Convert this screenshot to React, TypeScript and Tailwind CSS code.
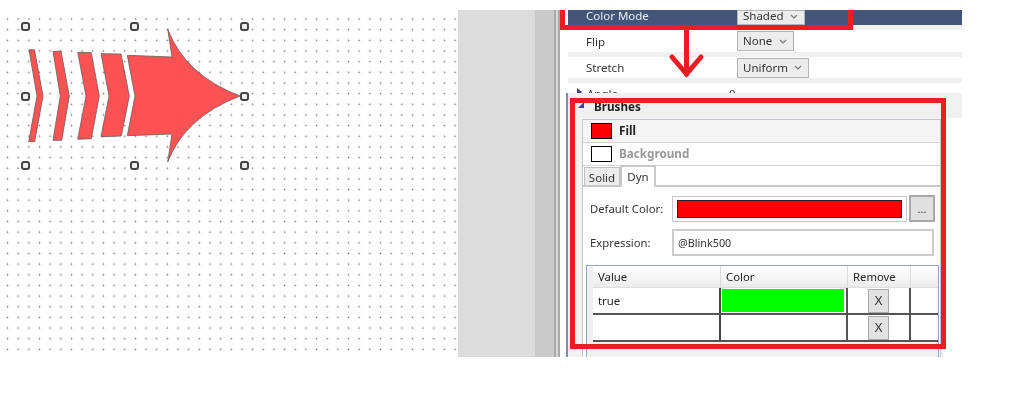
const handles = [
  "left-[21px] top-[12px]",
  "left-[130px] top-[12px]",
  "left-[240px] top-[12px]",
  "left-[21px] top-[82px]",
  "left-[240px] top-[82px]",
  "left-[21px] top-[151px]",
  "left-[130px] top-[151px]",
  "left-[240px] top-[151px]",
];

function ChevronDown() {
  return (
    <svg width="8" height="5" viewBox="0 0 8 5" fill="none" stroke="#777" strokeWidth="1.1">
      <path d="M1 1l3 3 3-3" />
    </svg>
  );
}

function Select({ label, width, height, className }: { label: string; width: string; height: string; className?: string }) {
  return (
    <div className={`${width} ${height} flex items-center justify-between pl-[5px] pr-[6px] bg-[#ececec] border border-[#b4b4b4] text-[11.5px] text-[#333] ${className ?? ""}`}>
      <span>{label}</span>
      <ChevronDown />
    </div>
  );
}

function ArrowShape() {
  return (
    <svg className="absolute left-0 top-[-10px]" width="260" height="180" viewBox="0 0 260 180" fill="#ff5252" stroke="#6b5a5a" strokeWidth="0.8">
      <path d="M29 49.7L34.5 49.7L43 96L34.7 141.7L28.7 141.7L37 96Z" />
      <path d="M53 51.5L61 51L69.3 96L61.7 140.3L53 140.3L60.3 96Z" />
      <path d="M77.7 52.3L91.3 52.7L99.3 96L91.3 138.7L77.7 139.3L86 96Z" />
      <path d="M101 53.7L121 54L129.3 96L121.3 136L101 136.7L109 96Z" />
      <path d="M127.3 55.3L172 57L167.7 29Q185 75 240 96Q185 117 167.7 162L172 134L127.3 135.7L135 96Z" />
    </svg>
  );
}

function Canvas() {
  return (
    <div className="relative w-[458px] h-full bg-white bg-[radial-gradient(circle,#787878_0.7px,transparent_1.1px)] bg-[size:10.67px_10.67px] bg-[position:2.2px_3.7px]">
      <ArrowShape />
      {handles.map((pos) => (
        <div key={pos} className={`absolute ${pos} w-[9px] h-[9px] rounded-[3px] bg-[#eeeeee] border-2 border-[#444]`} />
      ))}
    </div>
  );
}

function PropRow({ label, children, className, labelClass }: { label: string; children: React.ReactNode; className: string; labelClass?: string }) {
  return (
    <div className={`flex items-center pl-[18px] ${className}`}>
      <span className={`w-[151px] text-[11.5px] ${labelClass ?? ""}`}>{label}</span>
      {children}
    </div>
  );
}

function BrushRow({ color, label, active }: { color: string; label: string; active?: boolean }) {
  return (
    <div className={`flex items-center h-[23px] pl-[8px] gap-[7px] border-b border-[#d4d4da] ${active ? "bg-[#f5f5f5]" : "bg-white"}`}>
      <div className={`w-[21px] h-[16px] border border-black ${color}`} />
      <span className={`text-[11.7px] font-bold ${active ? "text-[#222]" : "text-[#999]"}`}>{label}</span>
    </div>
  );
}

function DynTable() {
  const rows = [
    { value: "true", green: true },
    { value: "", green: false },
  ];
  return (
    <div className="h-[100px] mt-[9px] bg-[#f0f0f0] border-l border-t border-r border-[#8fa5bf] text-[11.3px] text-[#222]">
      <div className="flex h-[22px] ml-[6px] bg-gradient-to-b from-white to-[#ececee] border-b border-[#dddddd]">
        <div className="w-[128px] pl-[5px] pt-[1px] flex items-center border-r border-[#dcdcdc]">Value</div>
        <div className="w-[127px] pl-[5px] pt-[1px] flex items-center border-r border-[#dcdcdc]">Color</div>
        <div className="w-[63px] pl-[5px] pt-[1px] flex items-center border-r border-[#dcdcdc]">Remove</div>
      </div>
      {rows.map((row, i) => (
        <div key={i} className="flex h-[27px] ml-[6px] bg-white border-b-2 border-[#555]">
          <div className="w-[128px] pl-[5px] pt-[1px] flex items-center border-r-2 border-[#444]">{row.value}</div>
          <div className="w-[127px] py-[1px] pl-[1px] pr-[2px] border-r-2 border-[#555]">
            {row.green && <div className="w-full h-full bg-[#00ff00]" />}
          </div>
          <div className="w-[63px] flex items-center justify-center border-r-2 border-[#555]">
            <div className="w-[21px] h-[24px] flex items-center justify-center bg-[#e2e2e2] border border-[#aaaaaa] text-[13px] text-[#333]">
              X
            </div>
          </div>
        </div>
      ))}
    </div>
  );
}

function BrushesPanel() {
  return (
    <div className="w-[377px] h-full pl-[14px] pr-[2px] bg-[#f2f2f2] border-l-2 border-[#7d8ea8] overflow-hidden">
      <div className="h-[300px] mt-[1px] bg-white border-l border-r border-t border-[#c4c4cc]">
        <BrushRow color="bg-[#ff0000]" label="Fill" active />
        <BrushRow color="bg-white" label="Background" />
        <div className="flex items-end h-[21px] pl-[1px] border-b-2 border-[#c8c8c8]">
          <div className="w-[36px] h-[18px] pt-[2px] flex items-center justify-center bg-[#ececec] border border-b-0 border-[#c0c0c0] text-[11.5px]">Solid</div>
          <div className="w-[36px] h-[22px] -mb-[2px] flex items-center justify-center bg-white border-2 border-b-0 border-[#c8c8c8] text-[11.5px]">Dyn</div>
        </div>
        <div className="pt-[8px] pl-[3px] pr-[1px]">
          <div className="flex items-center h-[27px] text-[11.3px] text-[#333]">
            <span className="w-[86px] pl-[4px] pt-[1px]">Default Color:</span>
            <div className="w-[235px] h-[26px] flex items-center px-[4px] border border-[#c8c8c8]">
              <div className="w-full h-[18px] bg-[#ff0000] border border-[#222]" />
            </div>
            <div className="ml-[2px] w-[26px] h-[27px] flex items-center justify-center bg-[#e0e0e0] border-2 border-[#a8a8a8] text-[11px] leading-none">...</div>
          </div>
          <div className="flex items-center h-[27px] mt-[7px] text-[11.3px] text-[#333]">
            <span className="w-[86px] pl-[4px] pt-[1px]">Expression:</span>
            <div className="w-[262px] h-[27px] flex items-center px-[4px] pt-[1px] border-2 border-[#cccccc] text-[10.8px]">@Blink500</div>
          </div>
          <DynTable />
        </div>
      </div>
    </div>
  );
}

function PropertyPanel() {
  return (
    <div className="w-[402px] h-full flex flex-col bg-white text-[#333]">
      <div className="ml-[8px] flex flex-col gap-[5px] bg-[#f0f0f0]">
        <PropRow label="Color Mode" labelClass="pb-[4px]" className="h-[15px] bg-[#42567a] text-[#e8edf5]">
          <Select label="Shaded" width="w-[68px]" height="h-[15px]" className="pb-[3px]" />
        </PropRow>
        <PropRow label="Flip" labelClass="pt-[2px]" className="h-[22px] bg-white">
          <Select label="None" width="w-[57px]" height="h-[20px]" />
        </PropRow>
        <PropRow label="Stretch" labelClass="pt-[1px]" className="h-[21px] bg-white">
          <Select label="Uniform" width="w-[72px]" height="h-[20px]" />
        </PropRow>
        <div className="relative flex h-[10px] pl-[19px] bg-white overflow-hidden text-[11.5px] leading-[16px]">
          <span className="w-[142px] pt-[3px]">Angle</span>
          <span className="pt-[3px]">0</span>
          <div className="absolute left-[9px] top-[5px] w-0 h-0 border-y-[4px] border-y-transparent border-l-[5px] border-l-[#3f3fa0]" />
        </div>
      </div>
      <div className="relative ml-[6px] h-[25px] flex items-center pl-[26px] pt-[2px] bg-[#f0f0f0] border-l-2 border-[#7d8ea8] text-[11.7px] font-bold text-[#222]">
        Brushes
        <div className="absolute left-[10px] top-[9px] w-0 h-0 border-b-[6px] border-b-[#3f3fa0] border-l-[6px] border-l-transparent" />
      </div>
      <div className="ml-[6px] flex-1 min-h-0 flex">
        <BrushesPanel />
      </div>
    </div>
  );
}

export default function App() {
  return (
    <div className="relative w-[1024px] h-[412px] pt-[10px] bg-white overflow-hidden font-['Noto_Sans',sans-serif] blur-[0.4px]">
      <div className="flex h-[347px]">
        <Canvas />
        <div className="w-[77px] h-full bg-[#dcdcdc]" />
        <div className="w-[19px] h-full bg-[#cacaca]" />
        <div className="w-[2px] h-full bg-[#a9a9a9]" />
        <div className="w-[2px] h-full bg-[#d6d6d6]" />
        <div className="w-[2px] h-full bg-[#a9a9a9]" />
        <PropertyPanel />
      </div>

      {/* red markup drawn on top of the screenshot */}
      <div className="absolute left-[560px] top-[10px] w-[293px] h-[20px] border-[5px] border-t-0 border-[#ed1c24]" />
      <div className="absolute left-[570px] top-[98px] w-[376px] h-[251px] border-[5px] border-[#ed1c24]" />
      <svg className="absolute left-[665px] top-[30px]" width="44" height="50" viewBox="0 0 44 50" fill="none" stroke="#ed1c24" strokeWidth="5" strokeLinecap="round" strokeLinejoin="miter">
        <path d="M21.5 0V44" />
        <path d="M7 27L21.5 44L36 27" />
      </svg>
    </div>
  );
}
